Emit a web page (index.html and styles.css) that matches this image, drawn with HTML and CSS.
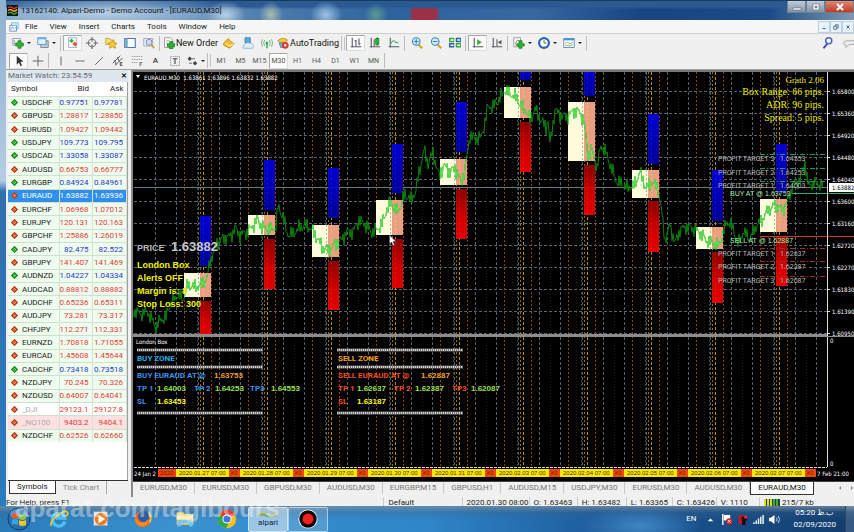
FILE: index.html
```html
<!DOCTYPE html>
<html lang="en">
<head>
	<meta charset="UTF-8">
	<title>Alpari-Demo - [EURAUD,M30]</title>
	<link rel="stylesheet" href="styles.css">
</head>
<body>

	<div class="window">

		<!-- Title bar -->
		<header class="titlebar">
			<svg class="logo" viewBox="0 0 12 12"><rect width="12" height="12" fill="#111"/><path d="M1 3q3-2 5 0t5-1" stroke="#e33" fill="none" stroke-width="1.5"/><path d="M1 6q3-2 5 0t5-1" stroke="#fb2" fill="none" stroke-width="1.5"/><path d="M1 9q3-2 5 0t5-1" stroke="#3b3" fill="none" stroke-width="1.5"/></svg>
			<h1>13162140: Alpari-Demo - Demo Account - [EURAUD,M30]</h1>
			<div class="controls">
				<button aria-label="Minimize"><svg viewBox="0 0 10 8"><path d="M1 5h8v2H1z" fill="#fff" stroke="#456" stroke-width=".5"/></svg></button>
				<button aria-label="Maximize"><svg viewBox="0 0 10 8"><path d="M2 1h6v6H2zM4 3v2h2V3z" fill="#fff" fill-rule="evenodd" stroke="#456" stroke-width=".5"/></svg></button>
				<button class="close" aria-label="Close"><svg viewBox="0 0 10 8"><path d="M2 1l6 6M8 1L2 7" stroke="#fff" stroke-width="2"/></svg></button>
			</div>
		</header>

		<!-- Menu -->
		<nav class="menubar">
			<svg class="menu-icon" viewBox="0 0 12 12"><path d="M3 1h8v7H3z" fill="#dff" stroke="#6ad"/><path d="M1 4h8v7H1z" fill="#fff" stroke="#58c"/><path d="M2 9l2-3 2 2 2-2" fill="none" stroke="#58c"/></svg>
			<button>File</button>
			<button>View</button>
			<button>Insert</button>
			<button>Charts</button>
			<button>Tools</button>
			<button>Window</button>
			<button>Help</button>
			<div class="child-controls">
				<button aria-label="Minimize chart"><svg viewBox="0 0 8 8"><path d="M2 6h4" stroke="#357" stroke-width="1.2"/></svg></button>
				<button aria-label="Restore chart"><svg viewBox="0 0 8 8"><path d="M3 3V1h4v4H5M1 3h4v4H1z" fill="none" stroke="#357"/></svg></button>
				<button aria-label="Close chart"><svg viewBox="0 0 8 8"><path d="M2 2l4 4M6 2L2 6" stroke="#357" stroke-width="1.2"/></svg></button>
			</div>
		</nav>

		<!-- Toolbar 1 -->
		<div class="toolbar first">
			<button class="drop" aria-label="New chart"><svg viewBox="0 0 16 16"><path d="M1 2h10v9H1z" fill="#eef6fa" stroke="#889"/><path d="M3 4v5h6" fill="none" stroke="#68a"/><path d="M8 5h4v3h3v4h-3v3H8v-3H5V8h3z" fill="#2db52d" stroke="#187a18"/></svg></button>
			<button class="drop" aria-label="Profiles"><svg viewBox="0 0 16 16"><path d="M5 5h10v9H5z" fill="#bcd" stroke="#678"/><path d="M1 1h11v9H1z" fill="#e4f1fc" stroke="#48a"/><path d="M1 2h11" stroke="#6ae" stroke-width="2"/></svg></button>
			<i class="sep"></i>
			<button class="on" aria-label="Market Watch"><svg viewBox="0 0 16 16"><path d="M2 1h11v13H2z" fill="#fff" stroke="#7ac"/><path d="M3 5l3-3 3 3-3 3z" fill="#3a4"/><path d="M7 9l3-3 4 3-3 4z" fill="#e54"/></svg></button>
			<button aria-label="Data Window"><svg viewBox="0 0 16 16"><circle cx="8" cy="8" r="5" fill="none" stroke="#777" stroke-width="1.5"/><path d="M8 0v6M8 10v6M0 8h6M10 8h6" stroke="#666" stroke-width="1.5"/></svg></button>
			<button aria-label="Navigator"><svg viewBox="0 0 16 16"><path d="M1 2h5l1 2h5v6H1z" fill="#fbe08a" stroke="#b90"/><path d="M10 5l2 3h4l-3 3 1 4-4-2-4 2 1-4-3-3h4z" fill="#fc3" stroke="#b80"/></svg></button>
			<button aria-label="Terminal"><svg viewBox="0 0 16 16"><path d="M1 2h14v12H1z" fill="#fff" stroke="#47b" stroke-width="1.5"/><path d="M1 2h4v12H1z" fill="#7ac"/></svg></button>
			<button aria-label="Strategy Tester"><svg viewBox="0 0 16 16"><path d="M1 2h12v10H1z" fill="#eef" stroke="#89a"/><circle cx="8" cy="7" r="4" fill="#cdf" stroke="#678"/><path d="M11 10l4 5" stroke="#c93" stroke-width="2"/></svg></button>
			<i class="sep"></i>
			<button class="text order"><svg viewBox="0 0 16 16"><path d="M2 1h8l3 3v10H2z" fill="#fff" stroke="#888"/><path d="M4 5h5M4 8h3" stroke="#999"/><path d="M9 6h4v3h3v4h-3v3H9v-3H6V9h3z" fill="#2db52d" stroke="#187a18"/></svg>New Order</button>
			<button aria-label="MetaEditor"><svg viewBox="0 0 16 16"><path d="M1 8l6-6 3 4 5 3-6 6-8-4z" fill="#f5bd2a" stroke="#b27a00"/><path d="M3 9l7 3 4-3" fill="none" stroke="#fff0a0" stroke-width="1.5"/></svg></button>
			<button aria-label="Publish"><svg viewBox="0 0 16 16"><path d="M4 1h7v7H4z" fill="#5ad" stroke="#37a"/><path d="M2 15q-2-4 2-5 2-4 6-2 3-1 4 2 3 3 0 5z" fill="#e6eef8" stroke="#7ac"/></svg></button>
			<button aria-label="Signals"><svg viewBox="0 0 16 16"><circle cx="8" cy="8" r="2" fill="#4a5"/><path d="M5 4q-3 4 0 8M11 4q3 4 0 8M2 3q-3 5 0 10M14 3q3 5 0 10" fill="none" stroke="#7b8" stroke-width="1.3"/><path d="M8 9v6" stroke="#4a5" stroke-width="2"/></svg></button>
			<button class="text auto"><svg viewBox="0 0 16 16"><path d="M1 5q6-6 13-1l-3 4H4z" fill="#f5c542" stroke="#b78a10"/><path d="M3 8h9v6H5z" fill="#7bd" stroke="#47a"/><circle cx="11" cy="11" r="4.5" fill="#e0352b"/><path d="M9.500 9.500h3v3h-3z" fill="#fff"/></svg>AutoTrading</button>
			<i class="sep"></i><i class="grip"></i>
			<button class="on" aria-label="Bar chart"><svg viewBox="0 0 16 16"><path d="M3 1v13M1 13h14M8 4v8M12 2v9M8 5H6M12 9h2" fill="none" stroke="#556" stroke-width="1.4"/></svg></button>
			<button aria-label="Candlesticks"><svg viewBox="0 0 16 16"><path d="M3 1v13M1 13h14M7 3v9" stroke="#556" stroke-width="1.4"/><path d="M11 0v12" stroke="#171"/><path d="M9 2h4v8H9z" fill="#2b3" stroke="#171"/></svg></button>
			<button aria-label="Line chart"><svg viewBox="0 0 16 16"><path d="M3 1v13M1 13h14" stroke="#556" stroke-width="1.4"/><path d="M3 10q4-8 7-3l4 1" fill="none" stroke="#4a6" stroke-width="1.4"/></svg></button>
			<i class="sep"></i>
			<button aria-label="Zoom in"><svg viewBox="0 0 16 16"><path d="M10 10l5 5" stroke="#d9a520" stroke-width="3"/><circle cx="7" cy="6" r="5" fill="#d8ecff" stroke="#38b" stroke-width="1.5"/><path d="M4 6h6M7 3v6" stroke="#38b" stroke-width="1.5"/></svg></button>
			<button aria-label="Zoom out"><svg viewBox="0 0 16 16"><path d="M10 10l5 5" stroke="#d9a520" stroke-width="3"/><circle cx="7" cy="6" r="5" fill="#d8ecff" stroke="#38b" stroke-width="1.5"/><path d="M4 6h6" stroke="#38b" stroke-width="1.5"/></svg></button>
			<button aria-label="Tile windows"><svg viewBox="0 0 16 16"><path d="M0 1h7v6H0zM9 8h7v6H9z" fill="#3a3"/><path d="M9 1h7v6H9zM0 8h7v6H0z" fill="#2a5fa8"/><path d="M2 4h4M11 4h4M2 11h4M11 11h4" stroke="#fff" stroke-width="2"/></svg></button>
			<i class="sep"></i>
			<button class="on" aria-label="Auto scroll"><svg viewBox="0 0 16 16"><path d="M3 1v13M1 13h14" stroke="#556" stroke-width="1.4"/><path d="M7 3l6 4-6 4z" fill="#3a3"/></svg></button>
			<button aria-label="Chart shift"><svg viewBox="0 0 16 16"><path d="M3 1v13M1 13h14M8 3v9" stroke="#556" stroke-width="1.4"/><path d="M14 4l-5 3 5 3z" fill="#654"/></svg></button>
			<i class="sep"></i>
			<button class="drop" aria-label="Indicators"><svg viewBox="0 0 16 16"><path d="M1 1h9v12H1z" fill="#fff" stroke="#888"/><path d="M3 10q2-8 5-5" fill="none" stroke="#666"/><path d="M8 5h4v4h3v3h-3v3H8v-3H5V9h3z" fill="#2db52d" stroke="#187a18"/></svg></button>
			<button class="drop" aria-label="Periods"><svg viewBox="0 0 16 16"><circle cx="8" cy="8" r="6.500" fill="#fff" stroke="#2467b5" stroke-width="3"/><path d="M8 4v4h3" fill="none" stroke="#333"/></svg></button>
			<button class="drop" aria-label="Templates"><svg viewBox="0 0 16 16"><path d="M1 2h14v12H1z" fill="#fff" stroke="#47a"/><path d="M1 3h14" stroke="#49c" stroke-width="3"/><path d="M3 9l3-2 3 2 4-2M3 12l3-1 3 1 4-2" fill="none" stroke="#786"/></svg></button>
			<i class="sep"></i>
			<div class="far">
				<button aria-label="Search"><svg viewBox="0 0 16 16"><path d="M7 9l-5 6" stroke="#34a" stroke-width="2.500"/><circle cx="9" cy="5" r="4" fill="#fff" stroke="#46c" stroke-width="2"/></svg></button>
				<button aria-label="Chat"><svg viewBox="0 0 16 16"><path d="M1 9q0-4 4-4h10v5H8l-4 4v-3q-3 0-3-2z" fill="#eee" stroke="#999"/></svg></button>
			</div>
		</div>

		<!-- Toolbar 2 -->
		<div class="toolbar second">
			<button class="on" aria-label="Cursor"><svg viewBox="0 0 16 16"><path d="M5 1v12l3-3 2 5 2-1-2-5h4z" fill="#333"/></svg></button>
			<button aria-label="Crosshair"><svg viewBox="0 0 16 16"><path d="M8 1v14M1 8h14" stroke="#666" stroke-width="1.300"/></svg></button>
			<i class="sep"></i>
			<button aria-label="Vertical line"><svg viewBox="0 0 16 16"><path d="M8 2v12" stroke="#666" stroke-width="1.300"/></svg></button>
			<button aria-label="Horizontal line"><svg viewBox="0 0 16 16"><path d="M2 8h12" stroke="#666" stroke-width="1.300"/></svg></button>
			<button aria-label="Trendline"><svg viewBox="0 0 16 16"><path d="M3 13L13 3" stroke="#666" stroke-width="1.300"/></svg></button>
			<button aria-label="Channel"><svg viewBox="0 0 16 16"><path d="M1 11L11 1M4 14L14 4M3 7l3 6M7 3l3 6M11 14v-4h3M11 12h2M11 14h3" fill="none" stroke="#555" stroke-width="1.300"/></svg></button>
			<button aria-label="Fibonacci"><svg viewBox="0 0 16 16"><path d="M1 2h14M1 6h14M1 10h9" stroke="#888" stroke-dasharray="2 1"/><path d="M12 15v-5h3M12 12h2" fill="none" stroke="#555"/></svg></button>
			<button class="letter">A</button>
			<button aria-label="Text label"><svg viewBox="0 0 16 16"><path d="M2 2h12v12H2z" fill="none" stroke="#888" stroke-dasharray="2 1"/><path d="M5 5h6M8 5v7" stroke="#444" stroke-width="1.500"/></svg></button>
			<button class="drop" aria-label="Arrows"><svg viewBox="0 0 16 16"><path d="M2 5l3-3 3 3-3 3zM9 11l3-3 3 3-3 3z" fill="#444"/><path d="M8 5h4M4 11h4" stroke="#444"/></svg></button>
			<i class="sep"></i><i class="grip"></i>
			<button class="period">M1</button>
			<button class="period">M5</button>
			<button class="period">M15</button>
			<button class="period on">M30</button>
			<button class="period">H1</button>
			<button class="period">H4</button>
			<button class="period">D1</button>
			<button class="period">W1</button>
			<button class="period">MN</button>
			<i class="sep"></i>
		</div>

		<main class="workspace">

			<!-- Market Watch -->
			<aside class="market">
				<div class="market-title"><h2>Market Watch: 23:54:59</h2><button aria-label="Close panel">&#10005;</button></div>
				<div class="market-list">
					<table>
						<thead><tr><th>Symbol</th><th>Bid</th><th>Ask</th></tr></thead>
						<tbody id="quotes"></tbody>
					</table>
				</div>
				<div class="market-tabs">
					<button class="active">Symbols</button>
					<button>Tick Chart</button>
				</div>
			</aside>

			<!-- Chart -->
			<section class="charts">
				<svg id="chart" viewBox="133 70 721 411" role="img" aria-label="EURAUD M30 chart">
					<defs>
						<linearGradient id="up" x2="0" y2="1"><stop offset="0" stop-color="#0000f0"/><stop offset="1" stop-color="#0000b0"/></linearGradient>
						<linearGradient id="down" x2="0" y2="1"><stop offset="0" stop-color="#a00000"/><stop offset=".6" stop-color="#f00000"/><stop offset="1" stop-color="#ff0000"/></linearGradient>
						<clipPath id="boxes"></clipPath>
					</defs>
				</svg>
				<nav class="chart-tabs">
					<button>EURUSD,M30</button>
					<button>EURUSD,M30</button>
					<button>GBPUSD,M30</button>
					<button>AUDUSD,M30</button>
					<button>EURGBP,M15</button>
					<button>GBPUSD,H1</button>
					<button>AUDUSD,M15</button>
					<button>USDJPY,M30</button>
					<button>EURUSD,M30</button>
					<button>AUDUSD,M30</button>
					<button class="active">EURAUD,M30</button>
					<span class="scroll"><i></i><i></i></span>
				</nav>
			</section>
		</main>

		<!-- Status bar -->
		<footer class="status">
			<span>For Help, press F1</span>
			<span>Default</span>
			<span>2020.01.30 08:00</span>
			<span>O: 1.63463</span>
			<span>H: 1.63482</span>
			<span>L: 1.63365</span>
			<span>C: 1.63426</span>
			<span>V: 1110</span>
			<span><svg class="signal" viewBox="0 0 16 8"><path d="M0 0h16v8H0z" fill="#243"/><path d="M1 0v8M4 0v8M7 0v8" stroke="#dd3" stroke-width="2"/><path d="M10 0v8M13 0v8" stroke="#4a4" stroke-width="2"/></svg>215/7 kb</span>
		</footer>
	</div>

	<!-- Taskbar -->
	<div class="taskbar">
		<button class="app start" aria-label="Start"><svg viewBox="0 0 24 24"><circle cx="12" cy="12" r="11" fill="#2a6db0" stroke="#123f70"/><ellipse cx="12" cy="7" rx="9" ry="5" fill="#7fb4dd" opacity=".6"/><path d="M5 7q3-2 6 0v5q-3-2-6 0z" fill="#f05a28"/><path d="M12 7q3 2 7 0v5q-4 2-7 0z" fill="#8cc63f"/><path d="M5 13q3-2 6 0v5q-3-2-6 0z" fill="#35a8e0"/><path d="M12 13q3 2 7 0v5q-4 2-7 0z" fill="#fbc91b"/></svg></button>
		<button class="app" aria-label="Internet Explorer"><svg viewBox="0 0 24 24"><path d="M19 15a7.500 7.500 0 1 1 0-4H8" fill="none" stroke="#4cc0f5" stroke-width="4"/><path d="M3 20Q0 16 10 8T22 4Q24 7 19 9" fill="none" stroke="#f5c52a" stroke-width="2"/></svg></button>
		<button class="app" aria-label="Media Player"><svg viewBox="0 0 24 24"><path d="M3 3h17v17H3z" fill="#d8e6f0" stroke="#89a"/><circle cx="12" cy="12" r="7.500" fill="#f27a1c"/><path d="M9 7l8 5-8 5z" fill="#fff"/></svg></button>
		<button class="app" aria-label="Firefox"><svg viewBox="0 0 24 24"><circle cx="12" cy="12" r="10" fill="#f06a20"/><circle cx="13" cy="9" r="7" fill="#2a5da8"/><path d="M2 8q2 8 9 8 6 0 7-5 2 8-6 10Q2 21 2 8z" fill="#f58a1f"/><path d="M19 4q4 6 1 12" fill="none" stroke="#ffc83a" stroke-width="2"/></svg></button>
		<button class="app" aria-label="Explorer"><svg viewBox="0 0 24 24"><path d="M2 4h8l2 2h10v13H2z" fill="#f0d070"/><path d="M2 8h20v5H2z" fill="#fff2b0"/><path d="M3 13h18v8h-4v-4H7v4H3z" fill="#7fc4ee"/></svg></button>
		<button class="app" aria-label="Chrome"><svg viewBox="0 0 24 24"><circle cx="12" cy="12" r="11" fill="#fbc116"/><path d="M12 12L2.500 6.500A11 11 0 0 1 21.500 6.500z" fill="#e33b2e"/><path d="M2.500 6.500A11 11 0 0 0 11 23l4-8-3-3z" fill="#2da94f"/><path d="M12 7h10" stroke="#e33b2e" stroke-width="3"/><circle cx="12" cy="12" r="5.500" fill="#fff"/><circle cx="12" cy="12" r="4.300" fill="#3b78e7"/></svg></button>
		<button class="task lit"><svg viewBox="0 0 24 8"><path d="M2 6q5-5 9-1t10-2" fill="none" stroke="#c5c06a" stroke-width="2"/><path d="M2 7q5-3 9 0t10-1" fill="none" stroke="#6aa870" stroke-width="2"/></svg>alpari</button>
		<button class="task" aria-label="Recorder"><svg class="rec" viewBox="0 0 24 24"><circle cx="12" cy="12" r="11.500" fill="#fff"/><circle cx="12" cy="12" r="10.500" fill="#0b0b0b"/><circle cx="12" cy="12" r="6.500" fill="#f32020"/></svg></button>
		<div class="tray">
			<span class="lang">EN</span>
			<svg viewBox="0 0 12 12"><path d="M3 8l3-3 3 3z" fill="#fff"/></svg>
			<svg viewBox="0 0 12 12"><path d="M2 0v12" stroke="#fff" stroke-width="1.500"/><path d="M3 1h7v6H3z" fill="#fff"/><circle cx="9" cy="8" r="3.500" fill="#d22"/><path d="M7.500 6.500l3 3M10.500 6.500l-3 3" stroke="#fff"/></svg>
			<svg viewBox="0 0 12 12"><path d="M2 1h5v10H2z" fill="#c11818"/><path d="M5 3h6v4H9v5H6z" fill="#200"/><path d="M8 2h3v3H8z" fill="#e33"/></svg>
			<svg viewBox="0 0 12 12"><path d="M1 9v2M3.500 7v4M6 5v6M8.500 3v8M11 1v10" stroke="#fff" stroke-width="1.500"/></svg>
			<svg viewBox="0 0 12 12"><path d="M0 4h2l4-3v10L2 8H0z" fill="#fff"/><path d="M8 4q1.500 2 0 4M10 2q3 4 0 8" fill="none" stroke="#dde"/></svg>
			<div class="clock"><span>05:20 &#1576;.&#1592;</span><span>02/09/2020</span></div>
			<button class="peek" aria-label="Show desktop"></button>
		</div>
	</div>

	<div class="watermark">aparat.com/tagibours</div>

<script src="chart.js"></script>
</body>
</html>
```
FILE: styles.css
```css
	* {
		box-sizing: border-box;
	}

	body {
		margin: 0;
		height: 100vh;
		display: flex;
		flex-direction: column;
		overflow: hidden;
		position: relative;
		font-family: Roboto, "Noto Sans", sans-serif;
		font-size: 8px;
		line-height: 12px;
		color: #222;
		background: linear-gradient(#8fb0cf, #a9c4de 25%, #b5cde4 34%, #2f6fae 36%, #2a7cc0);
	}

	button {
		font: inherit;
		color: inherit;
		border: 0;
		background: none;
		padding: 0;
		margin: 0;
	}

	h1, h2 {
		font-size: 8px;
		font-weight: normal;
		margin: 0;
	}

	svg {
		display: block;
	}

	.window {
		flex: 1;
		min-height: 0;
		margin-left: 6px;
		display: flex;
		flex-direction: column;
		background: #f0f0f0;
	}

	/* Title bar */
	.titlebar {
		height: 20px;
		display: flex;
		align-items: center;
		padding-left: 1px;
		background:
			radial-gradient(ellipse 12px 14px at 265px 14px, #a5bcb4, transparent),
			radial-gradient(ellipse 16px 14px at 320px 14px, #9cc4e6, transparent),
			radial-gradient(ellipse 12px 12px at 370px 14px, #5a9a96, transparent),
			radial-gradient(ellipse 130px 20px at 100px 12px, #b4cde4, transparent),
			radial-gradient(ellipse 20px 14px at 220px 14px, #b8d2e8, transparent),
			linear-gradient(#2a5a94 30%, transparent 45%),
			linear-gradient(90deg, transparent 404px, #9c3048 406px, #9c3048 430px, transparent 434px),
			linear-gradient(90deg, #7fa3c6, #5b87b4 25%, #2d639c 45%, #3768a0 62%, #164580 75%, #1b4b86 90%, #8097b2);
		border-top: 1px solid #1c3a5c;
	}

	.logo {
		width: 11px;
		height: 11px;
		margin-right: 3px;
	}

	.titlebar h1 {
		color: #111;
		white-space: nowrap;
	}

	.controls {
		display: flex;
		align-self: flex-start;
		margin-left: auto;
	}

	.controls button {
		width: 19px;
		height: 12px;
		border: 1px solid #6e7f92;
		border-top: 0;
		background: linear-gradient(#c0ccd8, #8594a6);
		display: flex;
		align-items: center;
		justify-content: center;
	}

	.controls .close {
		width: 29px;
		background: linear-gradient(#e08a74, #c03a20);
	}

	.controls svg {
		width: 10px;
		height: 8px;
	}

	/* Menu */
	.menubar {
		height: 14px;
		display: flex;
		align-items: center;
		gap: 12px;
		padding-left: 3px;
		background: #f6f6f6;
		border-bottom: 1px solid #d0d0d0;
	}

	.menu-icon {
		width: 10px;
		height: 10px;
		margin-right: -6px;
	}

	.child-controls {
		display: flex;
		margin-left: auto;
	}

	.child-controls button {
		width: 12px;
		height: 12px;
		padding: 2px;
		border: 1px solid #b8d0e4;
		background: #e8f2fa;
	}

	/* Toolbars */
	.toolbar {
		height: 18px;
		display: flex;
		align-items: center;
		padding-left: 3px;
		background: #f0f0f0;
	}

	.toolbar.second {
		border-bottom: 1px solid #a0a0a0;
	}

	.toolbar button {
		width: 19px;
		height: 16px;
		flex: none;
		display: flex;
		align-items: center;
		justify-content: center;
		border: 1px solid transparent;
	}

	.toolbar svg {
		width: 12px;
		height: 12px;
		flex: none;
	}

	.toolbar .on {
		background: #fafafa;
		border-color: #a8a8a8 #dcdcdc #dcdcdc #a8a8a8;
	}

	.toolbar .drop {
		width: 25px;
		gap: 3px;
	}

	.toolbar.second .drop {
		width: 22px;
	}

	.toolbar .drop::after {
		content: "";
		border: 2px solid transparent;
		border-top-color: #222;
		border-bottom: 0;
	}

	.toolbar .text {
		gap: 1px;
		white-space: nowrap;
		color: #111;
	}

	.toolbar .order {
		width: 57px;
		font-size: 9px;
	}

	.toolbar .auto {
		width: 64px;
		font-size: 9px;
	}

	.toolbar .letter {
		font-weight: bold;
		color: #555;
	}

	.toolbar .period {
		font-size: 7px;
		color: #555;
	}

	.sep {
		width: 1px;
		height: 15px;
		flex: none;
		margin: 0 2px 0 1px;
		background: #bdbdbd;
	}

	.grip {
		width: 1px;
		height: 13px;
		flex: none;
		margin-right: 1px;
		background: #c4c4c4;
	}

	.far {
		display: flex;
		gap: 2px;
		margin-left: auto;
		margin-right: -4px;
	}

	/* Middle part */
	.workspace {
		flex: 1;
		min-height: 0;
		display: flex;
	}

	.market {
		width: 125px;
		flex: none;
		display: flex;
		flex-direction: column;
		padding: 0 3px 2px 2px;
	}

	.market-title {
		height: 12px;
		display: flex;
		align-items: center;
		justify-content: space-between;
		background: #dfe6ee;
		color: #667;
	}

	.market-title button {
		width: 9px;
		color: #111;
		font-size: 7px;
		font-weight: bold;
	}

	.market-list {
		flex: 1;
		min-height: 0;
		background: #fff;
		border-right: 1px solid #a0a0a0;
	}

	table {
		width: 100%;
		height: 360px;
		border-collapse: collapse;
		table-layout: fixed;
	}

	th {
		height: 14px;
		font-weight: normal;
		line-height: 11px;
		padding: 0 3px;
		text-align: right;
	}

	th:first-child {
		width: 51px;
		text-align: left;
	}

	th:nth-child(2) {
		width: 33px;
	}

	td {
		padding: 0 3px 0 0;
		line-height: 11px;
		text-align: right;
		color: #e23b35;
		background: #effdef;
		border-top: 1px solid #cfe0cf;
		border-right: 1px solid #d5e3d5;
	}

	td:first-child {
		text-align: left;
		color: #222;
		white-space: nowrap;
	}

	.arrow {
		display: inline-block;
		width: 5px;
		height: 5px;
		margin: 0 5px 1px 4px;
		vertical-align: middle;
		transform: rotate(45deg);
		background: #f0764a;
		border: 1px solid #a83a18;
	}

	.up .arrow {
		background: #4cc44c;
		border-color: #1e7e1e;
	}

	.up td + td {
		color: #2a35d0;
	}

	.selected td, .selected td:first-child {
		background: #2f8fee;
		color: #fff;
	}

	.muted td {
		background: #fff;
	}

	.pink td {
		background: #ffe0e0;
	}

	.muted td:first-child, .pink td:first-child {
		color: #aaa;
	}

	.market-tabs {
		height: 15px;
		display: flex;
		align-items: flex-start;
		border-top: 1px solid #333;
		padding-left: 1px;
	}

	.market-tabs button {
		height: 13px;
		padding: 0 7px;
		color: #888;
		border-right: 1px solid #aaa;
	}

	.market-tabs .active {
		color: #222;
		background: #fff;
		border: 1px solid #333;
		border-top: 0;
	}

	/* Chart */
	.charts {
		flex: 1;
		min-width: 0;
		display: flex;
		flex-direction: column;
		border-left: 2px solid #8a8a8a;
		background: #000;
	}

	#chart {
		flex: 1;
		min-height: 0;
		width: 100%;
	}

	#chart text {
		font-family: "Liberation Sans", Arial, sans-serif;
		font-size: 8px;
		fill: #fff;
	}

	#chart .tiny {
		font-family: "DejaVu Sans Condensed", "DejaVu Sans", sans-serif;
		font-size: 6px;
	}

	#chart .date {
		font-size: 6px;
		fill: #3a3000;
	}

	#chart .side {
		font-size: 9px;
		font-weight: bold;
		fill: #f0f000;
	}

	#chart .price {
		font-size: 13px;
		font-weight: bold;
		fill: #c8c8c8;
	}

	#chart .info {
		font-family: "Liberation Serif", serif;
		font-size: 10px;
		fill: #e8e800;
		text-anchor: end;
	}

	#chart .version {
		font-size: 9px;
	}

	#chart .target {
		font-family: Roboto, sans-serif;
		font-size: 7px;
		fill: #b8b8b8;
	}

	#chart .entry {
		font-size: 7px;
		fill: #a8e8b0;
	}

	#chart .zone {
		font-family: Roboto, sans-serif;
		font-weight: bold;
	}

	#chart .value {
		font-weight: bold;
	}

	.chart-tabs {
		height: 16px;
		flex: none;
		display: flex;
		align-items: flex-start;
		background: #f0f0f0;
		border-top: 1px solid #444;
		color: #777;
	}

	.chart-tabs button {
		padding: 0 7px;
		white-space: nowrap;
		border-right: 1px solid #c8c8c8;
	}

	.chart-tabs .active {
		color: #111;
		background: #fff;
		border: 1px solid #333;
		border-top: 0;
	}

	.scroll {
		display: flex;
		gap: 10px;
		margin-left: auto;
		padding: 4px 1px 0 0;
	}

	.scroll i {
		border: 2px solid transparent;
		border-right-color: #888;
		border-left: 0;
	}

	.scroll i + i {
		border-left: 2px solid #888;
		border-right: 0;
	}

	/* Status bar: its lower edge is behind the taskbar */
	.status {
		height: 9px;
		flex: none;
		display: grid;
		grid-template-columns: 377fr 78fr 67fr 48fr 49fr 46fr 44fr 43fr 95fr;
		overflow: hidden;
	}

	.status span {
		display: flex;
		gap: 2px;
		padding-left: 4px;
		line-height: 12px;
		white-space: nowrap;
		border-left: 1px solid #ccc;
	}

	.status span:first-child {
		padding-left: 0;
		border-left: 0;
	}

	.signal {
		width: 16px;
		height: 8px;
		margin-top: 2px;
	}

	/* Taskbar */
	.taskbar {
		height: 26px;
		flex: none;
		display: flex;
		align-items: center;
		background:
			radial-gradient(ellipse 60px 20px at 640px 20px, #3f86c4, transparent),
			linear-gradient(rgba(120,140,160,0.8), rgba(60,100,140,0.3) 25%, transparent 60%),
			linear-gradient(90deg, #2a7ab8, #3a92cf 20%, #2f86c8 50%, #1d5c9c 70%, #123c6c);
	}

	.app {
		width: 42px;
		display: flex;
		justify-content: center;
	}

	.app svg {
		width: 20px;
		height: 20px;
	}

	.start {
		width: 38px;
	}

	.start svg {
		width: 24px;
		height: 24px;
	}

	.task {
		width: 40px;
		height: 25px;
		display: flex;
		flex-direction: column;
		align-items: center;
		justify-content: center;
		border: 1px solid rgba(255,255,255,0.5);
		border-radius: 2px;
		background: rgba(255,255,255,0.15);
		color: #123;
	}

	.task.lit {
		background: rgba(255,255,255,0.5);
	}

	.task svg {
		width: 24px;
		height: 8px;
	}

	.task .rec {
		width: 20px;
		height: 20px;
	}

	.tray {
		display: flex;
		align-items: center;
		gap: 5px;
		margin-left: auto;
		color: #fff;
	}

	.tray svg {
		width: 11px;
		height: 11px;
	}

	.lang {
		margin-right: 4px;
	}

	.clock {
		display: flex;
		flex-direction: column;
		align-items: center;
		margin: 0 4px 0 8px;
		line-height: 12px;
	}

	.peek {
		width: 9px;
		height: 26px;
		border-left: 1px solid #345;
		background: rgba(255,255,255,0.15);
	}

	.watermark {
		position: absolute;
		left: 15px;
		bottom: 11px;
		font-family: "Liberation Sans", Arial, sans-serif;
		font-size: 26px;
		font-weight: bold;
		line-height: 26px;
		color: rgba(255,255,255,0.4);
		pointer-events: none;
	}
```
FILE: chart.js
```js
// symbol, bid, ask, row classes
var quotes = [
	["USDCHF", "0.97751", "0.97781", "up"],
	["GBPUSD", "1.28817", "1.28850", ""],
	["EURUSD", "1.09427", "1.09442", ""],
	["USDJPY", "109.773", "109.795", "up"],
	["USDCAD", "1.33058", "1.33087", "up"],
	["AUDUSD", "0.66753", "0.66777", ""],
	["EURGBP", "0.84924", "0.84961", "up"],
	["EURAUD", "1.63882", "1.63936", "selected"],
	["EURCHF", "1.06968", "1.07012", ""],
	["EURJPY", "120.131", "120.163", ""],
	["GBPCHF", "1.25886", "1.26019", ""],
	["CADJPY", "82.475", "82.522", "up"],
	["GBPJPY", "141.407", "141.469", ""],
	["AUDNZD", "1.04227", "1.04334", "up"],
	["AUDCAD", "0.88812", "0.88882", ""],
	["AUDCHF", "0.65236", "0.65311", ""],
	["AUDJPY", "73.281", "73.317", ""],
	["CHFJPY", "112.271", "112.331", ""],
	["EURNZD", "1.70818", "1.71055", ""],
	["EURCAD", "1.45608", "1.45644", ""],
	["CADCHF", "0.73418", "0.73518", "up"],
	["NZDJPY", "70.245", "70.326", ""],
	["NZDUSD", "0.64007", "0.64041", ""],
	["_DJI", "29123.1", "29127.8", "muted"],
	["_NQ100", "9403.2", "9404.1", "pink"],
	["NZDCHF", "0.62526", "0.62660", ""]
];

document.getElementById("quotes").innerHTML = quotes.map(function (q) {
	return '<tr class="' + q[3] + '"><td><i class="arrow"></i>' + q[0] + "</td><td>" + q[1] + "</td><td>" + q[2] + "</td></tr>";
}).join("");

var out = "";

function line(x1, y1, x2, y2, color, dash) {
	out += '<line x1="' + x1 + '" y1="' + y1 + '" x2="' + x2 + '" y2="' + y2 + '" stroke="' + color + '"' + (dash ? ' stroke-dasharray="' + dash + '"' : "") + "/>";
}

function rect(x, y, w, h, fill) {
	out += '<rect x="' + x + '" y="' + y + '" width="' + w + '" height="' + h + '" fill="' + fill + '"/>';
}

function text(x, y, cls, str, fill) {
	out += '<text x="' + x + '" y="' + y + '" class="' + cls + '"' + (fill ? ' style="fill:' + fill + '"' : "") + ">" + str + "</text>";
}

// one row per day: box top/bottom, blue top/bottom, red top/bottom
var days = [
	[273, 297, 216, 266, 301, 334],
	[215, 235, 160, 210, 239, 289],
	[225, 257, 168, 218, 261, 310],
	[200, 235, 144, 193, 239, 288],
	[159, 185, 102, 152, 189, 239],
	[87, 118, 72, 80, 122, 172],
	[102, 161, 72, 96, 165, 215],
	[170, 198, 114, 164, 201, 252],
	[227, 249, 170, 221, 252, 303],
	[199, 232, 144, 193, 236, 286]
];
var dates = ["2020.01.27", "2020.01.28", "2020.01.29", "2020.01.30", "2020.01.31", "2020.02.03", "2020.02.04", "2020.02.05", "2020.02.06", "2020.02.07"];
var clip = "";

rect(133, 70, 721, 411, "#000");

// grid
for (var g = 0; g < 12; g++) {
	line(134, 91.5 + 22 * g, 827, 91.5 + 22 * g, "#5a636e", "3 2");
}
for (var v = 0; v < 32; v++) {
	var gx = Math.round(155 + v * 64 / 3) + 0.5;
	line(gx, 72, gx, 467, "#565f6a", "3 2");
}
for (var s = 0; s < 10; s++) {
	var sx = 184.5 + 64 * s;
	line(sx, 72, sx, 467, "#8c3c22", "2 2");
	line(sx + 13, 72, sx + 13, 467, "#3c4a30", "2 2");
	line(sx + 16, 72, sx + 16, 467, "#94681c", "2 2");
	line(sx + 19, 72, sx + 19, 467, "#b88c24", "3 2");
	line(sx + 27, 72, sx + 27, 467, "#8c3c22", "2 2");
	line(sx + 46, 72, sx + 46, 467, "#2a1a12", "1 2");
	line(sx + 8, 72, sx + 8, 467, "#201a24", "1 2");
}

// current price
line(134, 187.5, 827, 187.5, "#6c7a82");

// day blocks, the grid shows through a little
out += '<g opacity=".88">';
days.forEach(function (d, i) {
	var x = 184 + 64 * i;
	rect(x + 16, d[2], 11, d[3] - d[2], "url(#up)");
	rect(x + 16, d[4], 11, d[5] - d[4], "url(#down)");
	clip += '<rect x="' + x + '" y="' + d[0] + '" width="27" height="' + (d[1] - d[0]) + '"/>';
});
out += "</g>";
days.forEach(function (d, i) {
	var x = 184 + 64 * i;
	rect(x, d[0], 16, d[1] - d[0], "#fdfbdc");
	rect(x + 16, d[0], 11, d[1] - d[0], "#e9a081");
	line(x + 14.5, d[0], x + 14.5, d[1], "#b9b99a", "2 2");
	line(x + 19.5, d[0], x + 19.5, d[1], "#f2b878", "2 2");
});
document.getElementById("boxes").innerHTML = clip;

// price path
var pts = [
	134,311, 141,314, 147,311, 152,320, 156,327, 161,319, 166,318, 168,309, 173,300, 178,295, 183,299, 188,285, 195,287, 201,285, 207,278, 210,262,
	217,243, 224,238, 231,236, 235,228, 240,235, 247,232, 253,226, 258,219, 262,228, 266,228, 272,230, 276,226, 278,207, 283,216, 287,234, 293,234,
	299,228, 305,225, 311,228, 317,238, 323,248, 329,250, 335,244, 341,240, 347,232, 353,232, 359,220, 365,224, 371,232, 377,230, 382,224, 387,209,
	391,203, 397,212, 401,205, 405,194, 411,200, 416,190, 419,173, 424,150, 428,163, 433,153, 439,176, 444,165, 450,172, 455,168, 461,182, 465,170,
	470,135, 475,139, 481,137, 484,127, 488,106, 493,107, 500,98, 505,90, 512,95, 517,98, 522,108, 526,110, 530,120, 535,109, 541,120, 546,127,
	548,120, 550,144, 555,110, 560,115, 567,117, 573,111, 580,112, 584,122, 588,155, 592,150, 597,168, 601,145, 606,153, 612,170, 617,182,
	622,184, 628,188, 634,186, 640,172, 646,188, 652,182, 658,188, 662,215, 665,240, 670,225, 675,243, 680,230, 686,227, 695,229, 700,233, 706,240,
	712,243, 718,246, 722,238, 727,221, 733,228, 738,245, 743,232, 750,238, 757,225, 762,220, 768,210, 775,205, 783,210, 788,200, 793,185, 800,180,
	805,162, 808,185, 815,183, 824,186
];
var path = "M134 311";
var n = 0;
for (var p = 0; p < pts.length - 2; p += 2) {
	var dx = pts[p + 2] - pts[p];
	for (var k = 0; k < dx; k++) {
		n++;
		var y = pts[p + 1] + (pts[p + 3] - pts[p + 1]) * k / dx;
		// bars of uneven height round the trend
		var drift = 3 * Math.sin(n * 0.9) + 2 * Math.sin(n * 2.3);
		var amp = 1 + 3 * Math.abs(Math.sin(n * 12.9898));
		path += "L" + (pts[p] + k) + " " + (y + drift + (n % 2 ? amp : -amp)).toFixed(1);
	}
}
out += '<path d="' + path + '" fill="none" stroke="#0a840a"/>';
out += '<path d="' + path + '" fill="none" stroke="#62e25a" clip-path="url(#boxes)"/>';

// targets
line(760, 154.5, 827, 154.5, "#1f9a60", "5 2 1 2");
line(760, 168.5, 827, 168.5, "#1f9a60", "5 2 1 2");
line(760, 181.5, 827, 181.5, "#1f9a60", "5 2 1 2");
line(792, 193.5, 854, 193.5, "#2cae80");
line(760, 236.5, 854, 236.5, "#d03820");
line(760, 248.5, 827, 248.5, "#a03020", "5 2 1 2");
line(760, 261.5, 827, 261.5, "#a03020", "5 2 1 2");
line(760, 276.5, 827, 276.5, "#a03020", "5 2 1 2");
[[161, "3", "1.64553"], [175, "2", "1.64253"], [188, "1", "1.64003"], [256, "1", "1.62637"], [269, "2", "1.62387"], [283, "3", "1.62087"]].forEach(function (t) {
	text(718, t[0], "target", "PROFIT TARGET " + t[1]);
	text(780, t[0], "target", t[2]);
});
text(730, 196, "entry", "BUY AT @ 1.63753");
text(730, 243, "entry", "SELL AT @ 1.62887");

// labels on the chart
out += '<path d="M136 75h4l-2 3z" fill="#fff"/>';
text(144, 80, "tiny", "EURAUD.M30&#160; 1.63861 1.63896 1.63832 1.63882");
text(137, 251, "side", "PRICE", "#b8b8b8");
text(171, 251, "price", "1.63882");
text(137, 268, "side", "London Box");
text(137, 281, "side", "Alerts OFF");
text(137, 294, "side", "Margin is: 8");
text(137, 307, "side", "Stop Loss: 300");
text(824, 83, "info version", "Grath 2.06");
text(824, 95, "info", "Box Range: 66 pips.");
text(824, 108, "info", "ADR: 96 pips.");
text(824, 121, "info", "Spread: 5 pips.");

// price axis
line(827.5, 72, 827.5, 467, "#ddd");
["1.65800", "1.65360", "1.64920", "1.64480", "1.64040", "1.63600", "1.63160", "1.62720", "1.62270", "1.61830", "1.61390", "1.60950"].forEach(function (t, i) {
	line(827, 91.5 + 22 * i, 830, 91.5 + 22 * i, "#ddd");
	text(832, 94 + 22 * i, "tiny", t);
});
rect(829, 183, 25, 9, "#fff");
text(832, 190, "tiny", "1.63882", "#000");

// indicator window
rect(133, 334, 694, 3, "#8c8c8c");
rect(827, 336, 27, 1, "#8c8c8c");
rect(133, 70, 721, 2, "#777");
text(136, 344, "tiny", "London Box");
text(830, 343, "tiny", "0");
text(830, 466, "tiny", "0");
[137, 337].forEach(function (x) {
	[350, 367, 413].forEach(function (y) {
		out += '<line x1="' + x + '" y1="' + y + '" x2="' + (x + 126) + '" y2="' + y + '" stroke="#777" stroke-width="3"/>';
		out += '<line x1="' + x + '" y1="' + y + '" x2="' + (x + 126) + '" y2="' + y + '" stroke="#ccc" stroke-width="2" stroke-dasharray="1 1"/>';
	});
});
text(137, 361, "zone", "BUY ZONE", "#20b0e8");
text(137, 378, "zone", "BUY EURAUD AT @", "#3a90e8");
text(214, 378, "value", "1.63753", "#f0a030");
text(137, 391, "zone", "TP 1", "#3a90e8");
text(157, 391, "value", "1.64003", "#98e050");
text(194, 391, "zone", "TP 2", "#3a90e8");
text(215, 391, "value", "1.64253", "#98e050");
text(250, 391, "zone", "TP3", "#3a90e8");
text(271, 391, "value", "1.64553", "#98e050");
text(137, 404, "zone", "SL", "#3a90e8");
text(157, 404, "value", "1.63453", "#f8f820");
text(338, 361, "zone", "SELL ZONE", "#f0a020");
text(338, 378, "zone", "SELL EURAUD AT @", "#f05020");
text(421, 378, "value", "1.62887", "#f0a030");
text(338, 391, "zone", "TP 1", "#f05020");
text(357, 391, "value", "1.62637", "#98e050");
text(394, 391, "zone", "TP 2", "#f05020");
text(415, 391, "value", "1.62387", "#98e050");
text(452, 391, "zone", "TP3", "#f05020");
text(471, 391, "value", "1.62087", "#98e050");
text(338, 404, "zone", "SL", "#f05020");
text(357, 404, "value", "1.63187", "#f8f820");

// time axis
line(134, 467.5, 827, 467.5, "#ddd", "3 1");
text(134, 476, "tiny", "24 Jan 2");
rect(158, 469, 18, 8, "#f83c08");
text(160, 475, "date", "2020");
dates.forEach(function (d, i) {
	var x = 176 + 64 * i;
	rect(x, 469, 53, 8, "#ffe800");
	rect(x + 53, 469, 11, 8, "#f84408");
	text(x + 3, 475, "date", d + " 07:00");
	text(x + 54, 475, "date", "X0");
});
text(817, 476, "tiny", "7 Feb 21:00");

// mouse pointer
out += '<path d="M389.500 235v9l2-2 1.500 3.500 1.500-.5-1.500-3.500h3z" fill="#fff" stroke="#333" stroke-width=".5"/>';

document.getElementById("chart").innerHTML += out;
```
